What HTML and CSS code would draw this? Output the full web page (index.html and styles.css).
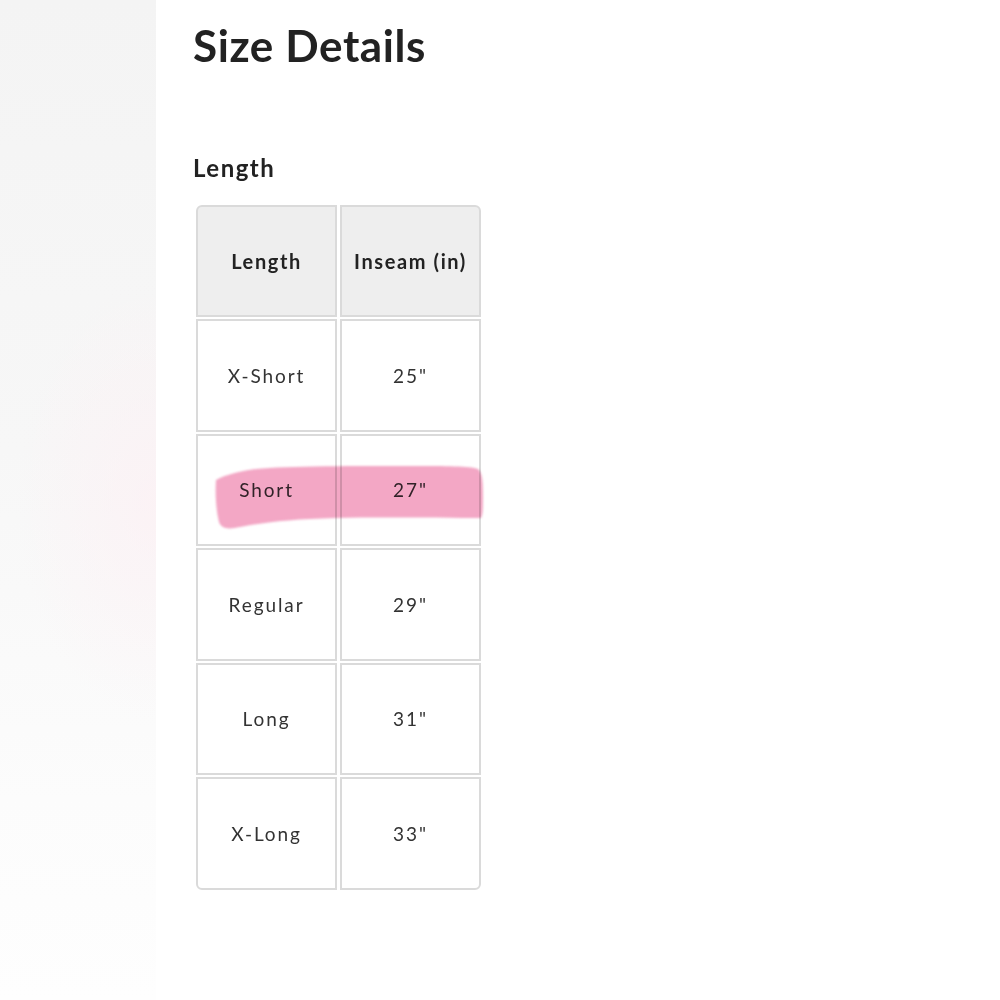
FILE: index.html
```html
<!DOCTYPE html>
<html lang="en">
<head>
    <meta charset="UTF-8">
    <meta name="viewport" content="width=device-width, initial-scale=1.0">
    <title>Size Details</title>
    <link rel="stylesheet" href="styles.css">
</head>
<body>

    <!-- faded side panel -->
    <div class="side"></div>

    <div class="content">
        <h1>Size Details</h1>
        <h2>Length</h2>

        <div class="table-wrap">
            <table class="sizes">
                <thead>
                    <tr>
                        <th>Length</th>
                        <th>Inseam (in)</th>
                    </tr>
                </thead>
                <tbody>
                    <tr><td>X-Short</td><td>25"</td></tr>
                    <tr><td>Short</td><td>27"</td></tr>
                    <tr><td>Regular</td><td>29"</td></tr>
                    <tr><td>Long</td><td>31"</td></tr>
                    <tr><td>X-Long</td><td>33"</td></tr>
                </tbody>
            </table>

            <!-- highlighter stroke over the "Short" row -->
            <svg class="marker" width="272" height="70" viewBox="0 0 272 70">
                <path d="M1 15 C 10 10, 22 7, 34 5 C 60 1, 120 1, 200 1 C 230 1, 255 1, 263 4 C 268 8, 268 20, 268 32 C 268 42, 268 50, 266 53 C 230 53, 170 52, 120 53 C 80 54, 50 57, 25 62 C 12 65, 6 63, 4 57 C 1 45, 0 28, 1 15 Z" fill="#f3a7c5"/>
            </svg>
        </div>
    </div>

</body>
</html>
```

FILE: styles.css
```css
body {
    margin: 0;
    display: flex;
    min-height: 100vh;
    background: #fff;
    font-family: Lato, "Open Sans", sans-serif;
    color: #222;
}
.side {
    width: 156px;
    flex-shrink: 0;
    background:
        radial-gradient(ellipse 140px 220px at 156px 500px, rgba(253, 240, 244, 0.7), rgba(253, 240, 244, 0)),
        linear-gradient(to bottom, #f4f4f4, #f7f7f7 45%, #fcfcfc 80%, #fefefe);
}
.content {
    padding-left: 37px;
}
h1 {
    font-size: 44px;
    font-weight: 700;
    letter-spacing: 0.6px;
    margin: 19px 0 0;
    line-height: 1.2;
}
h2 {
    font-size: 24px;
    font-weight: 700;
    letter-spacing: 1.5px;
    margin: 82px 0 0;
    line-height: 1.2;
}
.table-wrap {
    position: relative;
    margin-top: 20px;
}
.sizes {
    border-collapse: separate;
    border-spacing: 3px 2px;
}
.sizes th,
.sizes td {
    width: 137px;
    height: 108.5px;
    border: 2px solid #dadada;
    text-align: center;
    font-size: 19px;
    letter-spacing: 1.9px;
    padding: 0;
}
.sizes th {
    background: #eeeeee;
    font-size: 20px;
    font-weight: 700;
    letter-spacing: 1.6px;
}
.sizes td {
    font-weight: 400;
    color: #333;
}
.sizes thead th:first-child { border-top-left-radius: 6px; }
.sizes thead th:last-child { border-top-right-radius: 6px; }
.sizes tbody tr:last-child td:first-child { border-bottom-left-radius: 6px; }
.sizes tbody tr:last-child td:last-child { border-bottom-right-radius: 6px; }
.marker {
    position: absolute;
    left: 22px;
    top: 262px;
    mix-blend-mode: multiply;
    filter: blur(0.8px);
}
```
